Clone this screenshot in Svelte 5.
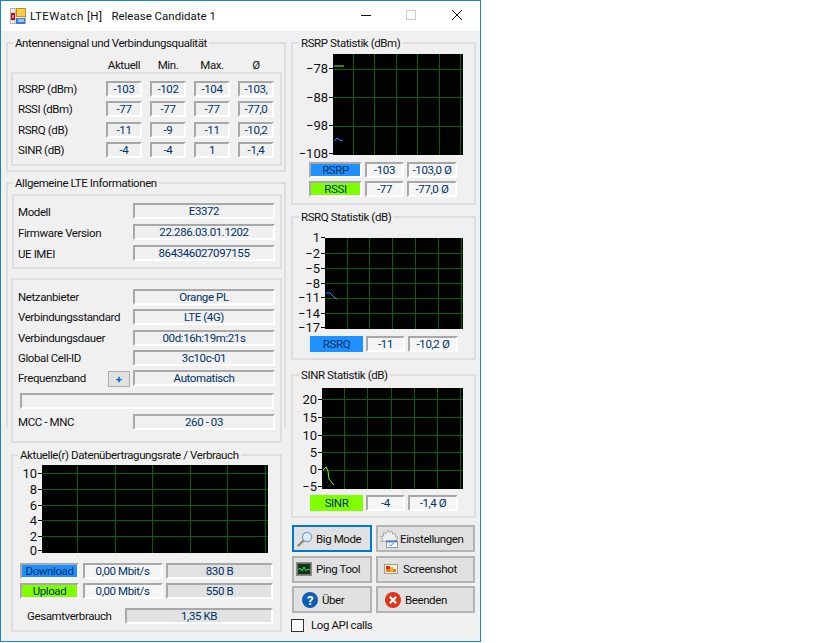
<script>
  const signal = [
    { label: "RSRP (dBm)", values: ["-103", "-102", "-104", "-103,"] },
    { label: "RSSI (dBm)", values: ["-77", "-77", "-77", "-77,0"] },
    { label: "RSRQ (dB)", values: ["-11", "-9", "-11", "-10,2"] },
    { label: "SINR (dB)", values: ["-4", "-4", "1", "-1,4"] }
  ];

  const device = [
    { label: "Modell", value: "E3372" },
    { label: "Firmware Version", value: "22.286.03.01.1202" },
    { label: "UE IMEI", value: "864346027097155" }
  ];

  const network = [
    { label: "Netzanbieter", value: "Orange PL" },
    { label: "Verbindungsstandard", value: "LTE (4G)" },
    { label: "Verbindungsdauer", value: "00d:16h:19m:21s" },
    { label: "Global Cell-ID", value: "3c10c-01" }
  ];

  // all chart numbers are page coordinates, the svg viewBox maps them
  const rsrpChart = {
    view: [300, 52, 166, 106],
    plot: [333, 54, 130, 101],
    xs: [353, 374, 396, 417, 439, 460],
    ys: [69, 97, 126],
    labels: [["−78", 68], ["−88", 97], ["−98", 125], ["−108", 153]],
    lines: [
      { color: "#7fff00", points: "334,66 344,66" },
      { color: "#1e90ff", points: "334,141 337,138 340,140 343,141" }
    ]
  };

  const rsrqChart = {
    view: [300, 236, 166, 96],
    plot: [325, 238, 138, 91],
    xs: [347, 369, 392, 415, 438, 461],
    ys: [253, 268, 283, 298, 313],
    labels: [["1", 237], ["−2", 253], ["−5", 268], ["−8", 283], ["−11", 297], ["−14", 313], ["−17", 327]],
    lines: [{ color: "#1e90ff", points: "326,293 330,293 335,298 337,299" }]
  };

  const sinrChart = {
    view: [300, 386, 166, 106],
    plot: [322, 388, 141, 101],
    xs: [344, 367, 391, 414, 437, 460],
    ys: [399, 417, 435, 452, 470],
    labels: [["20", 399], ["15", 417], ["10", 435], ["5", 452], ["0", 469], ["−5", 486]],
    lines: [{ color: "#7fff00", points: "323,470 326,467 328,471 329,479 333,484 334,485" }]
  };

  const rateChart = {
    view: [20, 463, 250, 93],
    plot: [42, 465, 226, 88],
    xs: [77, 115, 152, 190, 227, 265],
    ys: [473, 489, 505, 520, 536],
    labels: [["10", 473], ["8", 489], ["6", 505], ["4", 520], ["2", 536], ["0", 550]],
    lines: []
  };
</script>

{#snippet chart(c)}
  <svg
    class="chart"
    viewBox={c.view.join(" ")}
    width={c.view[2]}
    height={c.view[3]}
  >
    <rect x={c.plot[0]} y={c.plot[1]} width={c.plot[2]} height={c.plot[3]} fill="#000" />
    {#each c.xs as x}
      <line x1={x + 0.5} x2={x + 0.5} y1={c.plot[1]} y2={c.plot[1] + c.plot[3]} stroke="#006400" />
    {/each}
    {#each c.ys as y}
      <line x1={c.plot[0]} x2={c.plot[0] + c.plot[2]} y1={y + 0.5} y2={y + 0.5} stroke="#006400" />
    {/each}
    {#each c.labels as [text, y]}
      <line x1={c.plot[0] - 4} x2={c.plot[0]} y1={y + 0.5} y2={y + 0.5} stroke="#000" />
      <text x={c.plot[0] - 5} y={y + 5} text-anchor="end">{text}</text>
    {/each}
    {#each c.lines as l}
      <polyline points={l.points} fill="none" stroke={l.color} />
    {/each}
  </svg>
{/snippet}

<div class="window">
  <header class="titlebar">
    <svg class="app-icon" width="16" height="16" viewBox="0 0 16 16">
      <rect x="0.5" y="0.5" width="15" height="15" fill="#f4f4f4" stroke="#b4b4b4" />
      <path d="M0 5h16M0 12h5M5 0v16" stroke="#b4b4b4" fill="none" />
      <rect x="6" y="0" width="10" height="9" fill="#c68a10" />
      <rect x="7" y="1" width="8" height="7" fill="#f5d050" />
      <rect x="1" y="5" width="4" height="7" fill="#a81818" />
      <rect x="2" y="7" width="2" height="3" fill="#e88080" />
      <rect x="6" y="10" width="9" height="6" fill="#3f78d0" />
      <rect x="8" y="11" width="6" height="3" fill="#9cc4f0" />
    </svg>
    <span class="title">LTEWatch [H]</span>
    <span class="title rc">Release Candidate 1</span>
    <div class="caption">
      <svg width="120" height="12" viewBox="0 0 120 12">
        <path d="M1 5.5h10" stroke="#111" />
        <rect x="46.5" y="0.5" width="9" height="9" fill="none" stroke="#ccc" />
        <path d="M92 0l10 10M102 0l-10 10" stroke="#111" fill="none" />
      </svg>
    </div>
  </header>

  <div class="content">
    <div class="left">
      <section class="group quality">
        <div class="legend">Antennensignal und Verbindungsqualität</div>
        <div class="heads">
          <span></span><span>Aktuell</span><span>Min.</span><span>Max.</span><span>Ø</span>
        </div>
        <div class="box stats">
          {#each signal as row}
            <span class="lbl">{row.label}</span>
            {#each row.values as v}
              <span class="field">{v}</span>
            {/each}
          {/each}
        </div>
      </section>

      <section class="group general">
        <div class="legend">Allgemeine LTE Informationen</div>
        <div class="box device info">
          {#each device as row}
            <span class="lbl">{row.label}</span>
            <span class="field">{row.value}</span>
          {/each}
        </div>
        <div class="box network info">
          {#each network as row}
            <span class="lbl">{row.label}</span>
            <span class="field">{row.value}</span>
          {/each}
          <span class="lbl band">Frequenzband <button class="plus">+</button></span>
          <span class="field">Automatisch</span>
          <span class="field wide"></span>
          <span class="lbl mcc">MCC - MNC</span>
          <span class="field mcc">260 - 03</span>
        </div>
      </section>

      <section class="group rate">
        <div class="legend">Aktuelle(r) Datenübertragungsrate / Verbrauch</div>
        {@render chart(rateChart)}
        <div class="traffic">
          <span class="field tag blue">Download</span>
          <span class="field light">0,00 Mbit/s</span>
          <span class="field dark">830 B</span>
          <span class="field tag green">Upload</span>
          <span class="field light">0,00 Mbit/s</span>
          <span class="field dark">550 B</span>
        </div>
        <div class="total">
          <span class="lbl">Gesamtverbrauch</span>
          <span class="field dark">1,35 KB</span>
        </div>
      </section>
    </div>

    <div class="right">
      <section class="group stat rsrp">
        <div class="legend">RSRP Statistik (dBm)</div>
        {@render chart(rsrpChart)}
        <div class="readout">
          <span class="field tag blue">RSRP</span>
          <span class="field light">-103</span>
          <span class="field light">-103,0 Ø</span>
          <span class="field tag green">RSSI</span>
          <span class="field light">-77</span>
          <span class="field light">-77,0 Ø</span>
        </div>
      </section>

      <section class="group stat rsrq">
        <div class="legend">RSRQ Statistik (dB)</div>
        {@render chart(rsrqChart)}
        <div class="readout">
          <span class="field tag blue flat">RSRQ</span>
          <span class="field light">-11</span>
          <span class="field light">-10,2 Ø</span>
        </div>
      </section>

      <section class="group stat sinr">
        <div class="legend">SINR Statistik (dB)</div>
        {@render chart(sinrChart)}
        <div class="readout">
          <span class="field tag green flat">SINR</span>
          <span class="field light">-4</span>
          <span class="field light">-1,4 Ø</span>
        </div>
      </section>

      <div class="buttons">
        <button class="btn focus big">
          <svg width="16" height="16" viewBox="0 0 16 16">
            <path d="M1.5 14.5L7 9" stroke="#8a8a78" stroke-width="2.4" stroke-linecap="round" />
            <circle cx="10" cy="6" r="4.6" fill="#d6ecfa" stroke="#7a9fbe" stroke-width="1.2" />
            <path d="M7.5 5.5a3 3 0 0 1 3-2.3" stroke="#fff" fill="none" />
          </svg>
          Big Mode
        </button>
        <button class="btn settings">
          <svg width="19" height="20" viewBox="0 0 19 20">
            <path d="M8 1l1.6 2.5L12 2l.6 3 3-.5-.5 3 3 .8-2 2.4.8 1.8H1.2l1.6-2.3L.7 7.6l3-.8-.5-3 3 .7z" fill="#eeeeee" stroke="#a8a8a8" />
            <rect x="6.5" y="11.5" width="11" height="7" fill="#fbfbfb" stroke="#8a9ab0" />
            <rect x="7" y="12" width="10" height="1.5" fill="#4a86d0" />
            <path d="M9 15.5l1.5 1.5 3-3" stroke="#3a78c8" fill="none" />
          </svg>
          Einstellungen
        </button>
        <button class="btn ping">
          <svg width="16" height="14" viewBox="0 0 16 14">
            <rect x="0.5" y="0.5" width="15" height="13" fill="#6f6f6f" stroke="#8b8b8b" />
            <rect x="2" y="2" width="12" height="10" fill="#12351a" />
            <path d="M2 8l2-2 2 3 2-4 2 4 2-2 2 1" stroke="#48d858" fill="none" />
          </svg>
          Ping Tool
        </button>
        <button class="btn shot">
          <svg width="14" height="10" viewBox="0 0 14 10">
            <rect x="0.5" y="0.5" width="13" height="9" fill="#f6efe2" stroke="#a59a8c" />
            <rect x="2" y="2" width="4" height="3" fill="#d8301c" />
            <rect x="6" y="3" width="3" height="5" fill="#eeb020" />
            <rect x="2" y="5" width="4" height="3" fill="#e8801c" />
            <rect x="9" y="5" width="3" height="3" fill="#c8881c" />
          </svg>
          Screenshot
        </button>
        <button class="btn about">
          <svg width="16" height="16" viewBox="0 0 16 16">
            <circle cx="8" cy="8" r="8" fill="#0e5fb4" />
            <text x="8" y="12.5" text-anchor="middle" class="glyph">?</text>
          </svg>
          Über
        </button>
        <button class="btn quit">
          <svg width="16" height="16" viewBox="0 0 16 16">
            <circle cx="8" cy="8" r="8" fill="#e0341c" />
            <path d="M4.8 4.8l6.4 6.4M11.2 4.8l-6.4 6.4" stroke="#fff" stroke-width="2.2" />
          </svg>
          Beenden
        </button>
      </div>

      <label class="check">
        <input type="checkbox" />
        <span>Log API calls</span>
      </label>
    </div>
  </div>
</div>

<style>
  :global(body) {
    background: #fff;
  }

  .window {
    width: 481px;
    height: 642px;
    box-sizing: border-box;
    border: 1px solid #1883d7;
    background: #f0f0f0;
    font-family: Roboto, "Liberation Sans", sans-serif;
    font-size: 11.5px;
    letter-spacing: -0.4px;
    color: #111;
    overflow: hidden;
  }

  .titlebar {
    height: 30px;
    background: #fff;
    display: flex;
    align-items: center;
    padding-left: 9px;
  }

  .app-icon {
    margin-top: -1px;
  }

  .title {
    margin-left: 4px;
    letter-spacing: 0.4px;
  }

  .rc {
    margin-left: 9px;
    letter-spacing: 0;
  }

  .caption {
    margin-left: auto;
    margin-top: -1px;
    display: flex;
  }

  .content {
    display: flex;
    padding-top: 11px;
  }

  .left {
    width: 280px;
    margin-left: 5px;
    flex: none;
  }

  .right {
    width: 185px;
    margin-left: 5px;
    flex: none;
  }

  .group {
    border: 2px solid #dedede;
    box-sizing: border-box;
  }

  .legend {
    width: fit-content;
    height: 16px;
    line-height: 16px;
    margin: -9px 0 0 5px;
    padding: 0 2px;
    background: #f0f0f0;
    color: #111;
  }

  .box {
    border: 2px solid #dedede;
    box-sizing: border-box;
  }

  .field {
    display: block;
    height: 16px;
    box-sizing: border-box;
    border: 2px solid;
    border-color: #a8a8a8 #fff #fff #a8a8a8;
    color: #003366;
    line-height: 13px;
    text-align: center;
    white-space: nowrap;
    overflow: hidden;
  }

  .lbl {
    line-height: 16px;
    white-space: nowrap;
  }

  /* signal quality */
  .quality {
    height: 130px;
  }

  .heads {
    display: grid;
    grid-template-columns: 90px repeat(4, 36px);
    column-gap: 8px;
    height: 15px;
    margin-top: 7px;
    text-align: center;
    line-height: 15px;
  }

  .stats {
    width: 271px;
    height: 94px;
    margin: -1px 0 0 3px;
    padding: 7px 0 0 5px;
    display: grid;
    grid-template-columns: 80px repeat(4, 36px);
    column-gap: 8px;
    grid-auto-rows: 16px;
    row-gap: 4.33px;
  }

  /* general info */
  .general {
    height: 246px;
    margin-top: 10px;
    border-bottom: none;
  }

  .info {
    display: grid;
    grid-template-columns: 115px 142px;
    grid-auto-rows: 16px;
    row-gap: 4.33px;
  }

  .device {
    width: 270px;
    height: 75px;
    margin: 3px 0 0 4px;
    padding: 7px 0 0 4px;
    row-gap: 5px;
  }

  .device .lbl {
    margin-top: 1px;
  }

  .network {
    width: 271px;
    height: 165px;
    margin: 9px 0 0 3px;
    padding: 9px 0 0 5px;
  }

  .band {
    display: flex;
    justify-content: space-between;
    padding-right: 3px;
  }

  .plus {
    width: 22px;
    height: 16px;
    margin-top: 1px;
    padding: 0;
    background: #e1e1e1;
    border: 1px solid #adadad;
    color: #0066cc;
    font: inherit;
    font-weight: 700;
    line-height: 12px;
  }

  .wide {
    grid-column: 1 / -1;
    margin: 2px 0 -2px 2px;
    width: 254px;
  }

  .mcc {
    margin-top: 3px;
  }

  /* data rate */
  .rate {
    width: 271px;
    height: 178px;
    margin: 26px 0 0 5px;
  }

  .rate .legend {
    margin-left: 5px;
  }

  .chart {
    display: block;
    overflow: visible;
  }

  .chart text {
    font-family: Roboto, "Liberation Sans", sans-serif;
    font-size: 13px;
    letter-spacing: 0;
    fill: #111;
  }

  .rate .chart {
    margin: 0 0 0 7px;
  }

  .traffic {
    display: grid;
    grid-template-columns: 59px 80px 107px;
    column-gap: 3.5px;
    row-gap: 4px;
    grid-auto-rows: 16px;
    margin: 7px 0 0 7px;
  }

  .tag {
    color: #003366;
  }

  .blue {
    background: #1e90ff;
  }

  .green {
    background: #7fff00;
  }

  .flat {
    border-color: transparent;
  }

  .light {
    background: #f5f5f5;
  }

  .dark {
    background: #e2e2e2;
  }

  .total {
    display: flex;
    align-items: center;
    justify-content: space-between;
    margin: 9px 7px 0 14px;
  }

  .total .field {
    width: 148px;
  }

  /* right column */
  .stat {
    width: 185px;
  }

  .rsrp {
    height: 163px;
  }

  .rsrq {
    height: 144px;
    margin-top: 11px;
  }

  .sinr {
    height: 144px;
    margin-top: 14px;
  }

  .stat .legend {
    margin-left: 6px;
  }

  .stat .chart {
    margin: 1px 0 0 7px;
  }

  .rsrq .chart {
    margin-top: 11px;
  }

  .sinr .chart {
    margin-top: 3px;
  }

  .readout {
    display: grid;
    grid-template-columns: 53px 39px 50px;
    column-gap: 3px;
    row-gap: 3px;
    grid-auto-rows: 16px;
    margin: 4px 0 0 16px;
  }

  .rsrq .readout,
  .sinr .readout {
    margin-left: 17px;
  }

  .sinr .readout {
    margin-top: 3px;
  }

  .buttons {
    display: grid;
    grid-template-columns: 80px 99px;
    column-gap: 4px;
    row-gap: 3.5px;
    grid-auto-rows: 27px;
    margin: 7px 0 0 1px;
  }

  .btn {
    display: flex;
    align-items: center;
    padding: 0;
    background: #e1e1e1;
    border: 2px solid #b4b4b4;
    font: inherit;
    letter-spacing: inherit;
    color: #111;
    white-space: nowrap;
  }

  .focus {
    border-color: #0078d7;
  }

  .big {
    padding-left: 3px;
    gap: 3px;
  }

  .settings {
    padding-left: 2px;
    gap: 1px;
  }

  .ping {
    padding-left: 2px;
    gap: 4px;
  }

  .shot {
    padding-left: 6px;
    gap: 5px;
  }

  .about {
    padding-left: 8px;
    gap: 4px;
  }

  .quit {
    padding-left: 7px;
    gap: 4px;
  }

  .glyph {
    font-size: 13px;
    font-weight: 700;
    fill: #fff;
  }

  .check {
    display: flex;
    align-items: center;
    gap: 7px;
    margin-top: 4px;
    height: 16px;
  }

  .check input {
    appearance: none;
    width: 13px;
    height: 13px;
    margin: 0;
    background: #fff;
    border: 1px solid #333;
  }
</style>
